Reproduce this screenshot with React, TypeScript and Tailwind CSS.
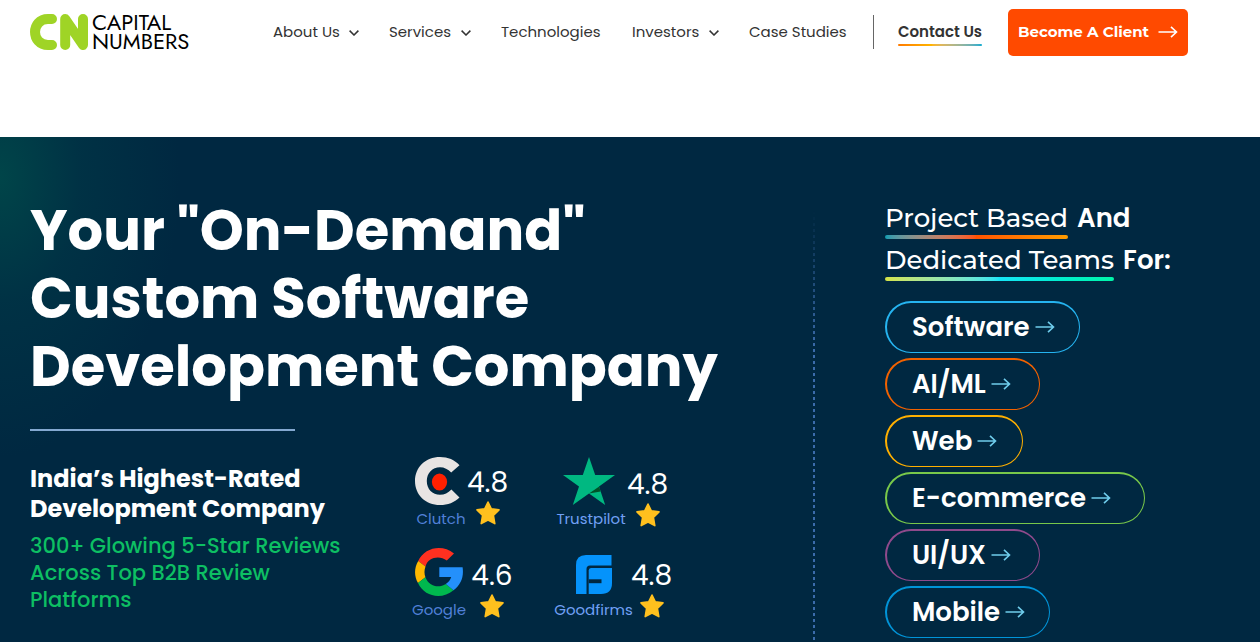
import type { ReactNode } from 'react';

const navItems = [
  { label: 'About Us', menu: true, width: 'w-[86px]' },
  { label: 'Services', menu: true, width: 'w-[82px]' },
  { label: 'Technologies', menu: false, width: 'w-[101px]' },
  { label: 'Investors', menu: true, width: 'w-[87px]' },
  { label: 'Case Studies', menu: false, width: 'w-[99px]' },
];

const services = [
  { label: 'Software', style: 'border-[#25b4f0] w-[195px]' },
  { label: 'AI/ML', style: 'border-[#f26200] w-[155px]' },
  { label: 'Web', style: 'border-[#ffb000] w-[138px]' },
  { label: 'E-commerce', style: 'border-[#78c84a] w-[260px]' },
  { label: 'UI/UX', style: 'border-[#8f4a8c] w-[155px]' },
  { label: 'Mobile', style: 'border-[#0094d8] w-[165px]' },
];

function Arrow({ className }: { className: string }) {
  return (
    <svg viewBox="0 0 20 14" className={`h-[14px] w-5 shrink-0 ${className}`} fill="none" stroke="currentColor" strokeWidth="1.6" aria-hidden="true">
      <path d="M0.5 7H18.5M13 1.8L18.5 7L13 12.2" />
    </svg>
  );
}

function Chevron() {
  return (
    <svg viewBox="0 0 10 6" className="mt-[2px] h-[6px] w-[10px]" fill="none" stroke="#333" strokeWidth="1.5" aria-hidden="true">
      <path d="M0.6 0.6L5 5L9.4 0.6" />
    </svg>
  );
}

function Star() {
  return (
    <svg viewBox="0 0 24 24" className="h-6 w-6" fill="#ffc01e" stroke="#ffc01e" strokeWidth="1.6" strokeLinejoin="round" aria-hidden="true">
      <path d="M12 1L15.3 7.8L23 8.9L17.4 14.3L18.8 22.6L12 19L5.2 22.6L6.6 14.3L1 8.9L8.7 7.8Z" />
    </svg>
  );
}

function Logo() {
  return (
    <a href="#" className="flex w-[160px] items-center gap-1 text-black">
      <svg viewBox="0 0 58 36" className="h-9 w-[58px] shrink-0" fill="none" stroke="#9fd426" strokeLinecap="round" strokeLinejoin="round" aria-hidden="true">
        <path d="M22 5H18C0.7 5 0.7 31 18 31H22" strokeWidth="10" />
        <path d="M35.2 31V5L53 31V5" strokeWidth="10" />
      </svg>
      <span className="font-['Jost','Lato',sans-serif] text-[22px] leading-[19px]">
        CAPITAL
        <br />
        NUMBERS
      </span>
    </a>
  );
}

function ClutchIcon() {
  return (
    <svg viewBox="0 0 45 48" className="mr-[7px] h-12 w-[45px]" aria-hidden="true">
      <path d="M44.5 8.2L36.2 15.6C33 12.2 29.3 10.2 25 10.2C17.3 10.2 11.8 16 11.8 24C11.8 32.2 17.4 37.8 25 37.8C29.5 37.8 33 35.8 36.4 32.4L44.5 40.4C39.3 45.4 33 48 25 48C10.5 48 0 37.8 0 24C0 10.2 10.6 0 25 0C33 0 39.6 2.8 44.5 8.2Z" fill="#e8e4e3" />
      <ellipse cx="24.5" cy="25" rx="7.6" ry="8.6" fill="#ff2000" />
    </svg>
  );
}

function TrustpilotIcon() {
  return (
    <svg viewBox="0 0 52 48" className="mr-1 h-12 w-[52px]" aria-hidden="true">
      <path d="M26 0L32.2 18H52L36 29.5L42.2 48L26 36.6L9.8 48L16 29.5L0 18H19.8Z" fill="#00b881" />
      <path d="M26 36.6L37.6 34.4L36.2 29.6Z" fill="#005128" />
    </svg>
  );
}

function GoogleIcon() {
  return (
    <svg viewBox="0 0 48 48" className="h-12 w-12" aria-hidden="true">
      <path d="M39 5.5L31.8 12.6C24 6.8 12.8 9.8 10.5 18.5L3.2 13C9.5-0.5 27-4.3 39 5.5Z" fill="#ff3020" />
      <path d="M3.2 13L10.5 18.5C9.1 22.2 9.2 26 10.4 29.2L3 35C-0.9 28.5-1 20 3.2 13Z" fill="#ffb800" />
      <path d="M3 35L10.4 29.2C13.8 38.2 23.5 40.7 30.8 36L38.5 42.2C27 52 9.3 49 3 35Z" fill="#00b84e" />
      <path d="M24.3 19.3H47.6C49 28.8 46 36.5 38.5 42.2L30.8 36C33.5 34.2 35.4 32 36.2 29H24.3Z" fill="#2490fb" />
    </svg>
  );
}

function GoodfirmsIcon() {
  return (
    <svg viewBox="0 0 36 39" className="mt-[7px] h-[39px] w-9" aria-hidden="true">
      <path d="M10 0H35.5V10.5H14Q10.5 10.5 10.5 14V39H0V10Q0 0 10 0Z" fill="#0593fb" />
      <path d="M15 13H36V28Q36 39 25 39H12.7V15.5Q12.7 13 15 13Z" fill="#0593fb" />
      <path d="M12.7 24.3H25.5V28.2H12.7Z" fill="#002841" />
    </svg>
  );
}

type RatingProps = { icon: ReactNode; name: string; score: string; column: string; scoreColumn: string; tone: string };

function Rating({ icon, name, score, column, scoreColumn, tone }: RatingProps) {
  return (
    <div className="flex h-[91px]">
      <div className={`flex flex-col items-center ${column}`}>
        <div className="h-[50px]">{icon}</div>
        <span className={`text-[15px] leading-6 ${tone}`}>{name}</span>
      </div>
      <div className={`flex flex-col items-center ${scoreColumn}`}>
        <span className="text-[28px] leading-9 text-white">{score}</span>
        <Star />
      </div>
    </div>
  );
}

export default function App() {
  return (
    <div className="flex min-h-screen flex-col bg-white font-['Poppins','Inter',sans-serif]">
      <header className="flex h-[137px] items-start px-[30px]">
        <div className="flex h-16 items-center">
          <Logo />
          <nav className="ml-[83px] flex gap-[30px] text-[15px] text-[#333]">
            {navItems.map((item) => (
              <a key={item.label} href="#" className={`flex items-center justify-between whitespace-nowrap ${item.width}`}>
                {item.label}
                {item.menu && <Chevron />}
              </a>
            ))}
          </nav>
          <div className="ml-[25px] h-[34px] w-px bg-[#666]" />
          <a href="#" className="ml-6 mt-[2px] whitespace-nowrap text-[15px] font-semibold leading-6 text-[#333]">
            Contact Us
            <span className="block h-[2px] rounded bg-linear-to-r from-[#ff7a00] via-[#ffb400] via-40% to-[#00acd0]" />
          </a>
          <button type="button" className="ml-[26px] flex h-[47px] w-[180px] items-center justify-between whitespace-nowrap rounded-[5px] bg-[#ff4a00] px-[10px] font-['Montserrat','Poppins',sans-serif] text-[15px] font-bold text-white">
            Become A Client
            <Arrow className="text-white" />
          </button>
        </div>
      </header>

      <main className="flex flex-1 bg-[#002841] bg-[radial-gradient(ellipse_180px_280px_at_0px_40px,#004549_0%,#00384799_45%,transparent_100%)] px-[30px]">
        <section className="w-[783px] shrink-0 pt-[60px]">
          <h1 className="text-[56px] font-bold leading-[68px] text-white">
            Your "On-Demand"
            <br />
            Custom Software
            <br />
            Development Company
          </h1>
          <div className="mt-7 h-[2px] w-[265px] bg-[#84a9d1]" />
          <div className="mt-[25px] flex">
            <div className="w-[381px] pt-2">
              <h2 className="text-2xl font-bold leading-[30px] text-white">
                India’s Highest-Rated
                <br />
                Development Company
              </h2>
              <p className="mt-2 text-[21px] font-medium leading-[27px] text-[#0dbf63]">
                300+ Glowing 5-Star Reviews
                <br />
                Across Top B2B Review
                <br />
                Platforms
              </p>
            </div>
            <div className="grid grid-cols-[144px_120px] content-start pt-px">
              <Rating icon={<ClutchIcon />} name="Clutch" score="4.8" column="w-14 pl-1" scoreColumn="w-[41px] pt-2" tone="text-[#5180d8]" />
              <Rating icon={<TrustpilotIcon />} name="Trustpilot" score="4.8" column="w-[72px]" scoreColumn="w-[41px] pt-[10px]" tone="text-[#71a0f5]" />
              <Rating icon={<GoogleIcon />} name="Google" score="4.6" column="w-14" scoreColumn="w-[50px] pt-[10px]" tone="text-[#5180d8]" />
              <Rating icon={<GoodfirmsIcon />} name="Goodfirms" score="4.8" column="w-[77px]" scoreColumn="w-[39px] pt-[10px]" tone="text-[#71a0f5]" />
            </div>
          </div>
        </section>

        <div className="mt-[74px] w-[2px] shrink-0 bg-[repeating-linear-gradient(to_bottom,#3b6cab_0px,#3b6cab_3px,transparent_3px,transparent_6px)] mask-[linear-gradient(to_bottom,transparent,black_140px)]" />

        <section className="ml-[70px] pb-1 pt-[60px]">
          <h2 className="text-[26px] font-semibold leading-[42px] text-white">
            <span className="flex gap-2 whitespace-nowrap">
              <span className="flex h-[42px] flex-col pr-px font-['Montserrat','Poppins',sans-serif] font-medium">
                Project Based
                <span className="-mt-1 h-1 shrink-0 rounded-full bg-linear-to-r from-[#009cb0] via-[#ff5200] to-[#ff9c00]" />
              </span>
              And
            </span>
            <span className="flex gap-2 whitespace-nowrap">
              <span className="flex h-[42px] flex-col pr-px font-['Montserrat','Poppins',sans-serif] font-medium">
                Dedicated Teams
                <span className="-mt-1 h-1 shrink-0 rounded-full bg-linear-to-r from-[#d4e345] via-[#16e5f5] to-[#00f5a8]" />
              </span>
              For:
            </span>
          </h2>
          <ul className="mt-5 flex flex-col gap-[5px]">
            {services.map((service) => (
              <li key={service.label}>
                <a href="#" className={`flex h-[52px] items-center gap-[5px] whitespace-nowrap rounded-full border border-l-2 border-t-2 pb-px pl-[25px] text-[26px] font-semibold leading-none text-white ${service.style}`}>
                  {service.label}
                  <Arrow className="text-[#6fcdec]" />
                </a>
              </li>
            ))}
          </ul>
        </section>
      </main>
    </div>
  );
}
